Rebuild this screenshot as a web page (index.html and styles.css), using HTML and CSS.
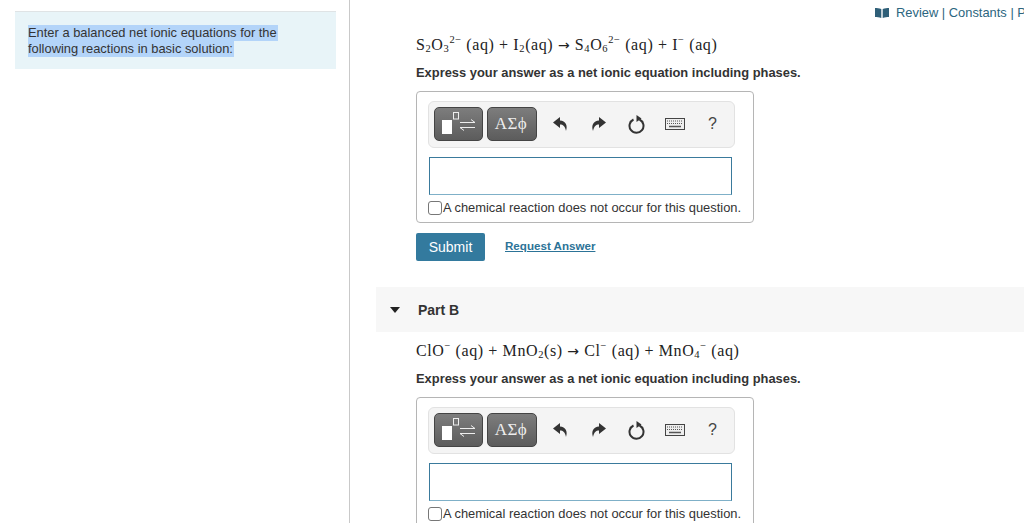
FILE: index.html
```html
<!DOCTYPE html>
<html lang="en">
<head>
<meta charset="utf-8">
<title>Net ionic equations</title>
<link rel="stylesheet" href="styles.css">
</head>
<body>
<div class="page">
  <aside class="left">
    <div class="intro"><p class="intro-text"><span class="sel">Enter a balanced net ionic equations for the</span><br><span class="sel">following reactions in basic solution:</span></p></div>
  </aside>
  <main class="right">
    <nav class="toplinks">
      <svg class="book" width="14" height="10" viewBox="0 0 14 10"><path d="M0 0c2 0 4 0 6.300 1v9C4 9 2 9 0 9zM14 0c-2 0-4 0-6.300 1v9c2.300-1 4.300-1 6.300-1z" fill="#2f5f78"/></svg>
      <span>Review | Constants | Periodic Table</span>
    </nav>
    <section class="part part-a">
      <p class="eq">S<sub>2</sub>O<sub>3</sub><sup>2−</sup> (aq) + I<sub>2</sub>(aq) <span class="arr">→</span> S<sub>4</sub>O<sub>6</sub><sup>2−</sup> (aq) + I<sup>−</sup> (aq)</p>
      <p class="prompt">Express your answer as a net ionic equation including phases.</p>
      <div class="answer">
        <div class="toolbar">
          <button class="tb tb-tmpl" type="button" aria-label="Templates">
            <svg width="40" height="26" viewBox="0 0 40 26"><rect x="3" y="9" width="10" height="14" fill="#fff"/><rect x="14.500" y="1.500" width="5" height="6.500" fill="none" stroke="#eee"/><path d="M21 11.500h15M32 8.500l4 3M36 16.500H21M25 19.500l-4-3" stroke="#eee" fill="none"/></svg>
          </button>
          <button class="tb tb-greek" type="button">ΑΣϕ</button>
          <svg class="ic ic-undo" width="16" height="16" viewBox="0 0 16 16"><path d="M7 1 0 6.500 7 12V8.500c3 0 5 1.500 6 6.500 2-6-.5-10-6-10.500z" fill="#333"/></svg>
          <svg class="ic ic-redo" width="16" height="16" viewBox="0 0 16 16"><path d="M9 1l7 5.500L9 12V8.500c-3 0-5 1.500-6 6.500-2-6 .5-10 6-10.500z" fill="#333"/></svg>
          <svg class="ic ic-reset" width="18" height="20" viewBox="0 0 18 20"><path d="M5.500 5.500a7 7 0 1 0 6 0" fill="none" stroke="#333" stroke-width="2"/><path d="M8.500 1v7l5-3.500z" fill="#333"/></svg>
          <svg class="ic ic-kbd" width="20" height="12" viewBox="0 0 20 12"><rect x=".5" y=".5" width="19" height="11" fill="#eee" stroke="#444"/><path d="M2 3h16M2 5.500h16" stroke="#555" stroke-dasharray="1 1"/><path d="M4 8.500h12" stroke="#555" stroke-width="1.500"/></svg>
          <span class="help">?</span>
        </div>
        <div class="field"></div>
        <label class="noreact"><span class="check"></span>A chemical reaction does not occur for this question.</label>
      </div>
      <div class="actions">
        <button class="submit" type="button">Submit</button>
        <a class="request" href="#">Request Answer</a>
      </div>
    </section>
    <header class="part-head">
      <svg class="caret" width="10" height="6" viewBox="0 0 10 6"><path d="M0 0h10L5 6z" fill="#222"/></svg>
      <h2 class="part-title">Part B</h2>
    </header>
    <section class="part part-b">
      <p class="eq">ClO<sup>−</sup> (aq) + MnO<sub>2</sub>(s) <span class="arr">→</span> Cl<sup>−</sup> (aq) + MnO<sub>4</sub><sup>−</sup> (aq)</p>
      <p class="prompt">Express your answer as a net ionic equation including phases.</p>
      <div class="answer">
        <div class="toolbar">
          <button class="tb tb-tmpl" type="button" aria-label="Templates">
            <svg width="40" height="26" viewBox="0 0 40 26"><rect x="3" y="9" width="10" height="14" fill="#fff"/><rect x="14.500" y="1.500" width="5" height="6.500" fill="none" stroke="#eee"/><path d="M21 11.500h15M32 8.500l4 3M36 16.500H21M25 19.500l-4-3" stroke="#eee" fill="none"/></svg>
          </button>
          <button class="tb tb-greek" type="button">ΑΣϕ</button>
          <svg class="ic ic-undo" width="16" height="16" viewBox="0 0 16 16"><path d="M7 1 0 6.500 7 12V8.500c3 0 5 1.500 6 6.500 2-6-.5-10-6-10.500z" fill="#333"/></svg>
          <svg class="ic ic-redo" width="16" height="16" viewBox="0 0 16 16"><path d="M9 1l7 5.500L9 12V8.500c-3 0-5 1.500-6 6.500-2-6 .5-10 6-10.500z" fill="#333"/></svg>
          <svg class="ic ic-reset" width="18" height="20" viewBox="0 0 18 20"><path d="M5.500 5.500a7 7 0 1 0 6 0" fill="none" stroke="#333" stroke-width="2"/><path d="M8.500 1v7l5-3.500z" fill="#333"/></svg>
          <svg class="ic ic-kbd" width="20" height="12" viewBox="0 0 20 12"><rect x=".5" y=".5" width="19" height="11" fill="#eee" stroke="#444"/><path d="M2 3h16M2 5.500h16" stroke="#555" stroke-dasharray="1 1"/><path d="M4 8.500h12" stroke="#555" stroke-width="1.500"/></svg>
          <span class="help">?</span>
        </div>
        <div class="field"></div>
        <label class="noreact"><span class="check"></span>A chemical reaction does not occur for this question.</label>
      </div>
    </section>
  </main>
</div>
</body>
</html>
```
FILE: styles.css
```css
* { box-sizing: border-box; }
html, body { margin: 0; height: 523px; overflow: hidden; background: #fff; }
body { font-family: "Liberation Sans", Arial, sans-serif; color: #333; }
p, h2 { margin: 0; }

.page { display: flex; height: 523px; }

.left { width: 350px; flex: none; border-right: 1px solid #c9c9c9; padding: 11px 13px 0 15px; }
.intro { height: 58px; background: #e8f4f8; border-top: 1px solid #dfe3e5; padding: 13px 13px 0; }
.intro-text { font-size: 12.9px; line-height: 16px; color: #333; }
.sel { display: inline-block; background: #b3d4f9; padding-right: 1px; }

.right { flex: 1; min-width: 0; padding-left: 26px; overflow: hidden; }

.toplinks { display: flex; align-items: center; height: 25px; padding-left: 499px; white-space: nowrap; font-size: 12.9px; color: #2c6680; }
.book { flex: none; margin-right: 7px; }

.part { padding-left: 40px; }
.part-a { height: 262px; }
.eq { font-family: "Liberation Serif", "Times New Roman", serif; font-size: 16px; line-height: 20px; color: #222; white-space: nowrap; letter-spacing: .6px; padding-top: 10px; height: 30px; box-sizing: content-box; }
.eq sub, .eq sup { font-size: 10.5px; line-height: 0; }
.eq sub { vertical-align: -2px; }
.eq sup { vertical-align: 7px; }
.arr { font-family: "DejaVu Sans", sans-serif; font-size: 14px; }
.prompt { font-size: 12.9px; font-weight: bold; line-height: 16px; color: #333; white-space: nowrap; }

.answer { width: 338px; height: 132px; margin-top: 10px; border: 1px solid #b5b5b5; border-radius: 4px; padding: 9px 11px 0; }
.toolbar { display: flex; align-items: center; width: 307px; height: 47px; background: #f4f4f4; border: 1px solid #e2e2e2; border-radius: 6px; padding: 0 0 1px 5px; }
.tb { height: 34px; padding: 0; border: 1px solid #444; border-radius: 5px; background: linear-gradient(#7d7d7d, #5c5c5c); color: #eee; display: flex; align-items: center; justify-content: center; }
.tb-tmpl { width: 49px; }
.tb-greek { width: 50px; margin-left: 4px; padding-right: 2px; font-family: "Liberation Serif", serif; font-size: 17px; letter-spacing: .5px; }
.ic { flex: none; display: block; }
.ic-undo { margin-left: 16px; }
.ic-redo { margin-left: 21px; }
.ic-reset { margin-left: 22px; }
.ic-kbd { margin-left: 19px; }
.help { margin-left: 23px; font-size: 16px; color: #444; }

.field { width: 303px; height: 38px; margin: 9px 0 0 1px; border: 1px solid #3a7a9c; border-bottom-color: #7fb0c8; background: #fff; }
.noreact { display: flex; align-items: center; height: 16px; margin-top: 4px; font-size: 12.9px; color: #333; white-space: nowrap; }
.check { flex: none; width: 14px; height: 14px; margin: 1px 1px 0 0; border: 1px solid #777; border-radius: 3px; background: #fff; }

.actions { display: flex; align-items: center; margin-top: 10px; }
.submit { width: 69px; height: 28px; padding: 0; border: 0; border-radius: 2px; background: #337a9e; color: #fff; font: 14px "Liberation Sans", Arial, sans-serif; }
.request { margin: 0 0 3px 20px; font-size: 11.6px; font-weight: bold; color: #2c7397; }

.part-head { display: flex; align-items: center; height: 45px; background: #f7f7f7; padding-left: 14px; }
.caret { flex: none; margin-right: 18px; }
.part-title { font-size: 14px; font-weight: bold; color: #333; }
.part-b .eq { padding-top: 9px; height: 29px; }
.part-b .prompt { margin-top: 1px; }
```
